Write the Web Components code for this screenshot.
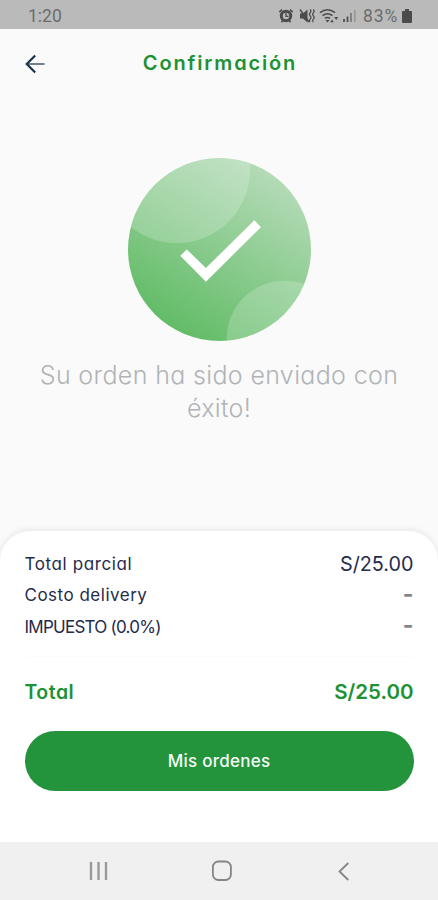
<!DOCTYPE html>
<html lang="es">
<head>
<meta charset="utf-8">
<meta name="viewport" content="width=device-width, initial-scale=1">
<title>Confirmación</title>
<style>
    body {
        margin: 0;
        font-family: Inter, "Open Sans", sans-serif;
        font-feature-settings: "cv11";
        background: #fafafa;
    }
</style>
</head>
<body>
<order-screen>
    <status-bar slot="status" time="1:20" battery="83%"></status-bar>
    <app-header slot="header">Confirmación</app-header>
    <success-message>Su orden ha sido enviado con éxito!</success-message>
    <order-summary slot="summary">
        <summary-row label="Total parcial" style="--track:.6px">S/25.00</summary-row>
        <summary-row label="Costo delivery" style="--track:.5px" empty>-</summary-row>
        <summary-row label="IMPUESTO (0.0%)" style="--track:-.75px" empty>-</summary-row>
        <summary-row label="Total" total slot="total" style="--track:.5px">S/25.00</summary-row>
        <pill-button slot="action">Mis ordenes</pill-button>
    </order-summary>
    <nav-bar slot="nav"></nav-bar>
</order-screen>

<script>
function component(name, html) {
    class CustomElement extends HTMLElement {
        constructor() {
            super();
            const template = document.createElement("template");
            template.innerHTML = typeof html == "function" ? html(this) : html;
            this.attachShadow({mode: "open"}).appendChild(template.content.cloneNode(true));
        }
    }
    window.customElements.define(name, CustomElement);
}

component("order-screen", `
    <style>
        :host {
            display: flex;
            flex-direction: column;
            height: 900px;
            overflow: hidden;
        }
        main {
            flex: 1;
        }
    </style>
    <slot name="status"></slot>
    <slot name="header"></slot>
    <main><slot></slot></main>
    <slot name="summary"></slot>
    <slot name="nav"></slot>
`);

component("status-bar", el => `
    <style>
        :host {
            display: flex;
            align-items: center;
            justify-content: space-between;
            box-sizing: border-box;
            height: 29px;
            padding: 2px 26px 0 28px;
            background: #bababa;
            color: #6c6c6c;
            font: 17.5px/20px Roboto, sans-serif;
        }
        .icons {
            display: flex;
            align-items: center;
        }
        svg {
            display: block;
        }
        .level {
            margin: 0 4px 0 6px;
            letter-spacing: .8px;
        }
    </style>
    <span>${el.getAttribute("time")}</span>
    <div class="icons">
        <!-- alarm, muted, wifi, signal -->
        <svg width="79" height="18" viewBox="0 0 79 18" fill="none" stroke="#4b4b4b">
            <circle cx="8" cy="9" r="4.7" stroke-width="3"/>
            <path d="M8 6v3.3h2.5" stroke-width="1.3"/>
            <path d="M1.3 5.2 4 2.6M14.7 5.2 12 2.6M3.4 15.2l1.6-2M12.6 15.2l-1.6-2" stroke-width="1.6"/>
            <path d="M22 6.5h3l4.5-4v13l-4.5-4h-3z" fill="#4b4b4b" stroke="none"/>
            <path d="M22 2.5 31 15" stroke-width="1.4"/>
            <path d="M32.2 2.5q1.5 1.6 0 3.2t0 3.2 0 3.2 0 3M35.4 2.5q1.5 1.6 0 3.2t0 3.2 0 3.2 0 3" stroke-width="1.2"/>
            <path d="M42 5.6q7.5-5.5 15 0M44.5 8.6q5-3.8 10 0M47 11.4q2.5-2 5 0" stroke-width="1.5"/>
            <path d="m49.5 15.5-2-2.6h4zM54 12.5l1.8 2.7h-3.6zM58.2 13 56.2 10h4z" fill="#4b4b4b" stroke="none"/>
            <path d="M66 15v-3M69.5 15V9.5" stroke-width="1.7"/>
            <path d="M73 15V6" stroke="#777" stroke-width="1.7"/>
            <path d="M76.8 15V3" stroke="#949494" stroke-width="1.5"/>
        </svg>
        <span class="level">${el.getAttribute("battery")}</span>
        <svg width="10" height="14" viewBox="0 0 10 14" fill="#4b4b4b">
            <path d="M3 0h4v2h2q1 0 1 1v10q0 1-1 1H1q-1 0-1-1V3q0-1 1-1h2z"/>
        </svg>
    </div>
`);

component("app-header", `
    <style>
        :host {
            display: grid;
            grid-template-columns: 46px 1fr 46px;
            align-items: center;
            height: 69px;
            color: #1d9233;
            font-size: 20px;
            font-weight: 600;
            letter-spacing: 1.85px;
            text-align: center;
        }
        svg {
            display: block;
            margin-left: 25px;
        }
        span {
            padding: 0 0 2px 2px;
        }
    </style>
    <svg width="21" height="20" viewBox="0 0 21 20" fill="none">
        <path d="M2 10h17.5" stroke="#75808e" stroke-width="2"/>
        <path d="M10.2 1.5 1.7 10l8.500 8.500" stroke="#1c3350" stroke-width="2.2"/>
    </svg>
    <span><slot></slot></span>
`);

component("success-message", `
    <style>
        :host {
            display: flex;
            flex-direction: column;
            align-items: center;
            gap: 18px;
            padding: 60px 30px 0;
        }
        p {
            margin: 0;
            color: #b1b4b7;
            font-size: 25px;
            font-weight: 300;
            line-height: 33px;
            letter-spacing: .35px;
            text-align: center;
        }
    </style>
    <svg width="183" height="183" viewBox="0 0 182 182">
        <defs>
            <linearGradient id="fill" x1=".3" y1="1" x2=".85" y2=".15">
                <stop offset="0" stop-color="#60bb65"/>
                <stop offset="1" stop-color="#b2dab5"/>
            </linearGradient>
            <clipPath id="round"><circle cx="91" cy="91" r="91"/></clipPath>
        </defs>
        <g clip-path="url(#round)">
            <rect width="182" height="182" fill="url(#fill)"/>
            <circle cx="48.5" cy="11.7" r="73" fill="#fff" fill-opacity=".2"/>
            <circle cx="156" cy="180" r="58" fill="#fff" fill-opacity=".2"/>
        </g>
        <path d="m52 97.300 6.500-6.300 19 18.300L125.700 62l6.500 6.800L77.500 123z" fill="#fff"/>
    </svg>
    <p><slot></slot></p>
`);

component("order-summary", `
    <style>
        :host {
            display: block;
            box-sizing: border-box;
            height: 311px;
            padding: 17px 24.5px 0;
            border-radius: 30px 30px 0 0;
            background: #fff;
            box-shadow: 0 -2px 6px rgba(0, 0, 0, .07);
        }
        .total {
            margin: 13px 0 21px;
            padding-top: 17px;
            border-top: 1px solid #fcfcfc;
        }
    </style>
    <slot></slot>
    <div class="total"><slot name="total"></slot></div>
    <slot name="action"></slot>
`);

component("summary-row", el => `
    <style>
        :host {
            display: flex;
            align-items: center;
            justify-content: space-between;
            height: 31.5px;
            color: #252b4d;
            font-size: 17px;
        }
        :host([total]) {
            height: 36px;
            color: #1d9233;
            font-size: 19.5px;
            font-weight: 600;
        }
        .label {
            letter-spacing: var(--track, 0);
        }
        .value {
            font-size: 19.8px;
        }
        :host([empty]) .value {
            padding-bottom: 3px;
            color: #858585;
            font-size: 23px;
            font-weight: 700;
        }
        :host([total]) .value {
            font-size: 20.5px;
        }
    </style>
    <span class="label">${el.getAttribute("label")}</span>
    <span class="value"><slot></slot></span>
`);

component("pill-button", `
    <style>
        :host {
            display: block;
        }
        button {
            display: block;
            width: 100%;
            height: 60px;
            padding: 0;
            border: 0;
            border-radius: 30px;
            background: #24943c;
            color: #f4faf5;
            font: inherit;
            font-feature-settings: inherit;
            font-size: 17px;
            font-weight: 500;
            letter-spacing: .25px;
        }
    </style>
    <button><slot></slot></button>
`);

component("nav-bar", `
    <style>
        :host {
            display: flex;
            align-items: center;
            justify-content: space-between;
            box-sizing: border-box;
            height: 58px;
            padding: 0 88px;
            background: #f0f0f0;
        }
    </style>
    <svg width="20" height="20" viewBox="0 0 20 20" stroke="#999" stroke-width="2.4">
        <path d="M3 1v18M10.5 1v18M18 1v18"/>
    </svg>
    <svg width="22" height="22" viewBox="0 0 22 22" fill="none" stroke="#858585" stroke-width="1.8">
        <rect x="0.9" y="1.5" width="18" height="18.5" rx="5.5"/>
    </svg>
    <svg width="12" height="20" viewBox="0 0 12 20" fill="none" stroke="#858585" stroke-width="1.8">
        <path d="M10.3 2 1.500 10.500l8.800 8.500"/>
    </svg>
`);
</script>
</body>
</html>
